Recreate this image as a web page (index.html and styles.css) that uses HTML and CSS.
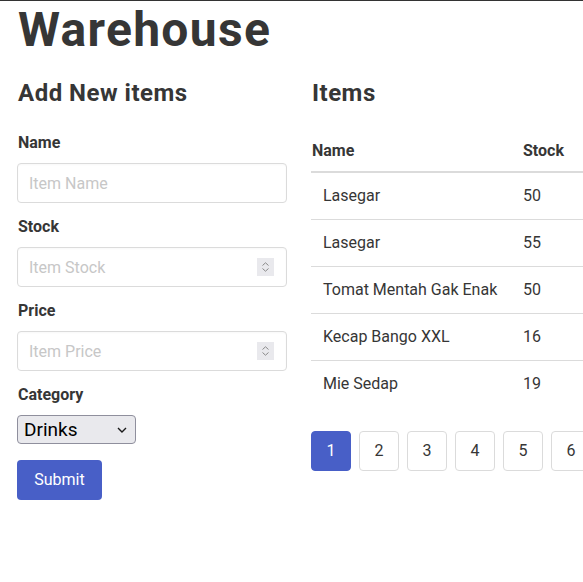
FILE: index.html
```html
<!DOCTYPE html>
<html lang="en">
<head>
<meta charset="utf-8">
<title>Warehouse</title>
<link rel="stylesheet" href="styles.css">
</head>
<body>
<div class="topline"></div>
<div class="page">
  <h1 class="title-main">Warehouse</h1>
  <div class="columns">
    <section class="col-left">
      <h2 class="title-sub">Add New items</h2>
      <form class="form">
        <div class="field">
          <label class="label">Name</label>
          <input class="input" type="text" placeholder="Item Name">
        </div>
        <div class="field">
          <label class="label">Stock</label>
          <div class="num-wrap">
            <input class="input" type="text" placeholder="Item Stock">
            <span class="spin"><svg width="9" height="12" viewBox="0 0 9 12"><path d="M1.5 4.5 L4.5 1.8 L7.5 4.5 M1.5 7.5 L4.5 10.2 L7.5 7.5" fill="none" stroke="#8a8a8a" stroke-width="1"/></svg></span>
          </div>
        </div>
        <div class="field">
          <label class="label">Price</label>
          <div class="num-wrap">
            <input class="input" type="text" placeholder="Item Price">
            <span class="spin"><svg width="9" height="12" viewBox="0 0 9 12"><path d="M1.5 4.5 L4.5 1.8 L7.5 4.5 M1.5 7.5 L4.5 10.2 L7.5 7.5" fill="none" stroke="#8a8a8a" stroke-width="1"/></svg></span>
          </div>
        </div>
        <div class="field">
          <label class="label">Category</label>
          <div class="select-wrap">
            <select class="select">
              <option>Drinks</option>
              <option>Foods</option>
            </select>
            <svg class="chev" width="10" height="6" viewBox="0 0 10 6"><path d="M1 1 L5 5 L9 1" fill="none" stroke="#1a1a1a" stroke-width="1.4"/></svg>
          </div>
        </div>
        <button class="button" type="button">Submit</button>
      </form>
    </section>
    <section class="col-right">
      <h2 class="title-sub">Items</h2>
      <table class="table">
        <thead>
          <tr><th>Name</th><th>Stock</th></tr>
        </thead>
        <tbody>
          <tr><td>Lasegar</td><td>50</td></tr>
          <tr><td>Lasegar</td><td>55</td></tr>
          <tr><td>Tomat Mentah Gak Enak</td><td>50</td></tr>
          <tr><td>Kecap Bango XXL</td><td>16</td></tr>
          <tr><td>Mie Sedap</td><td>19</td></tr>
        </tbody>
      </table>
      <nav class="pagination">
        <a class="page-link current">1</a>
        <a class="page-link">2</a>
        <a class="page-link">3</a>
        <a class="page-link">4</a>
        <a class="page-link">5</a>
        <a class="page-link">6</a>
      </nav>
    </section>
  </div>
</div>
</body>
</html>
```

FILE: styles.css
```css
html {
  overflow: hidden;
}
body {
  margin: 0;
  font-family: Roboto, "Liberation Sans", sans-serif;
  font-size: 16px;
  line-height: 1.5;
  color: #4a4a4a;
  background: #fff;
}
.topline {
  border-top: 1px solid #333;
}
.page {
  padding: 2px 0 0 17px;
  width: 600px;
}
.title-main {
  margin: 0 0 23px 1px;
  font-size: 48px;
  line-height: 54px;
  font-weight: 700;
  letter-spacing: 1.3px;
  color: #363636;
}
.columns {
  display: flex;
  gap: 24px;
}
.col-left {
  width: 270px;
  flex: none;
}
.col-right {
  flex: none;
  width: 290px;
}
.title-sub {
  margin: 0 0 24px 1px;
  font-size: 24px;
  line-height: 27px;
  font-weight: 700;
  letter-spacing: 0.5px;
  color: #363636;
}
.form {
  display: flex;
  flex-direction: column;
}
.field {
  display: flex;
  flex-direction: column;
  margin-bottom: 12px;
}
.label {
  font-weight: 700;
  color: #363636;
  margin: 0 0 8px 1px;
}
.input {
  box-sizing: border-box;
  width: 270px;
  height: 40px;
  border: 1px solid #dbdbdb;
  border-radius: 4px;
  padding: 0 11px;
  font: inherit;
  color: #363636;
  outline: none;
  box-shadow: inset 0 1px 2px rgba(10,10,10,0.03);
}
.input::placeholder {
  color: #c7c7c7;
}
.num-wrap {
  position: relative;
  width: 270px;
}
.spin {
  position: absolute;
  right: 13px;
  top: 11px;
  width: 17px;
  height: 18px;
  background: #e9e9ed;
  display: flex;
  align-items: center;
  justify-content: center;
}
.select-wrap {
  position: relative;
  width: 119px;
  margin-bottom: 4px;
}
.select {
  -webkit-appearance: none;
  appearance: none;
  box-sizing: border-box;
  width: 119px;
  height: 29px;
  border: 1px solid #8f8f9d;
  border-radius: 4px;
  background: #e9e9ed;
  color: #000;
  font-family: Roboto, sans-serif;
  font-size: 19px;
  padding: 0 0 0 6px;
}
.chev {
  position: absolute;
  right: 9px;
  top: 12px;
  pointer-events: none;
}
.button {
  align-self: flex-start;
  box-sizing: border-box;
  width: 85px;
  height: 40px;
  border: none;
  border-radius: 4px;
  background: #485fc7;
  color: #fff;
  font: inherit;
  padding: 0 16px;
}
.table {
  border-collapse: collapse;
  width: 290px;
  color: #363636;
}
.table th {
  text-align: left;
  font-weight: 700;
  color: #363636;
  padding: 8px 12px;
  border-bottom: 2px solid #dbdbdb;
  line-height: 24px;
}
.table th:first-child {
  padding-left: 1px;
}
.table td {
  padding: 11px 12px;
  line-height: 24px;
  border-bottom: 1px solid #dbdbdb;
  white-space: nowrap;
}
.table td:first-child {
  width: 176px;
}
.table tbody tr:last-child td {
  border-bottom: none;
}
.pagination {
  display: flex;
  gap: 8px;
  margin-top: 24px;
}
.page-link {
  box-sizing: border-box;
  width: 40px;
  height: 40px;
  border: 1px solid #dbdbdb;
  border-radius: 4px;
  display: flex;
  align-items: center;
  justify-content: center;
  color: #363636;
  flex: none;
}
.page-link.current {
  background: #485fc7;
  border-color: #485fc7;
  color: #fff;
}
```
